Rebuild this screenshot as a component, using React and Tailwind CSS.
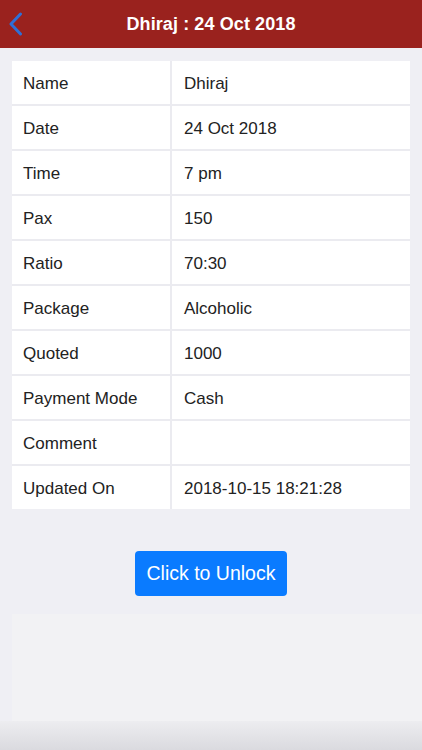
import { Fragment } from "react";

export default function App() {
  const rows = [
    ["Name", "Dhiraj"],
    ["Date", "24 Oct 2018"],
    ["Time", "7 pm"],
    ["Pax", "150"],
    ["Ratio", "70:30"],
    ["Package", "Alcoholic"],
    ["Quoted", "1000"],
    ["Payment Mode", "Cash"],
    ["Comment", ""],
    ["Updated On", "2018-10-15 18:21:28"],
  ];
  return (
    <div
      className="w-[422px] h-[750px] bg-[#EFEFF4] flex flex-col overflow-hidden"
      style={{ fontFamily: '"Liberation Sans", Arial, sans-serif' }}
    >
      <div className="h-[48px] bg-[#9A221E] flex items-center relative shrink-0">
        <svg className="absolute left-[8px] top-[12px]" width="16" height="24" viewBox="0 0 16 24">
          <path d="M12.5 2 L3 12 L12.5 22" fill="none" stroke="#2F6FD6" strokeWidth="3" strokeLinecap="round" strokeLinejoin="round" />
        </svg>
        <div className="w-full text-center text-white text-[18px] font-bold tracking-[0.1px] pt-[1px]">Dhiraj : 24 Oct 2018</div>
      </div>
      <div className="mt-[13px] mx-[12px] grid grid-cols-[158px_1fr] gap-[2px] bg-[#EBEBF0]">
        {rows.map(([k, v]) => (
          <Fragment key={k}>
            <div className="bg-white h-[43px] flex items-center pl-[11px] pt-[3px] text-[17px] text-[#222]">{k}</div>
            <div className="bg-white h-[43px] flex items-center pl-[12px] pt-[3px] text-[17px] text-[#222]">{v}</div>
          </Fragment>
        ))}
      </div>
      <div className="flex justify-center mt-[42px]">
        <button className="w-[152px] h-[45px] rounded-[4px] bg-[#0A7BFF] text-white text-[19.5px] flex items-center justify-center pt-[1px]">
          Click to Unlock
        </button>
      </div>
      <div className="mt-[18px] ml-[12px] h-[107px] bg-[#F2F2F4]" />
      <div className="flex-1 bg-gradient-to-b from-[#EDEDF0] to-[#DADADF]" />
    </div>
  );
}
